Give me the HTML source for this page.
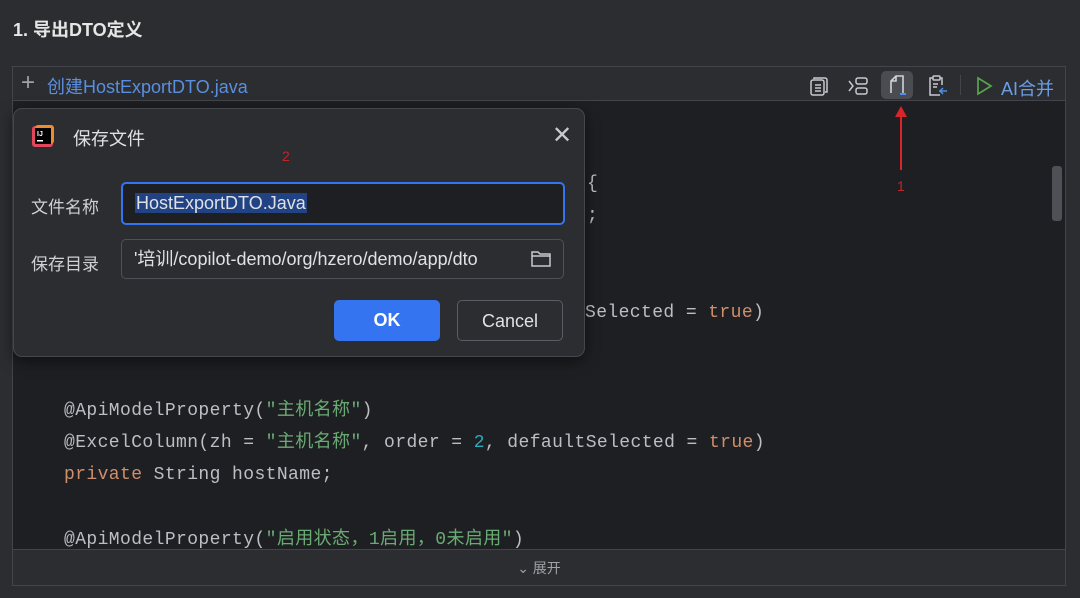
<!DOCTYPE html>
<html><head><meta charset="utf-8"><style>
*{margin:0;padding:0;box-sizing:border-box}
body{width:1080px;height:598px;background:#2b2d30;position:relative;overflow:hidden;font-family:"Liberation Sans","Noto Sans CJK SC",sans-serif;color:#dfe1e5}
.abs{position:absolute}
.title{left:13px;top:16px;font-size:18px;font-weight:bold;color:#e6e6e6}
.box{left:12px;top:66px;width:1054px;height:520px;border:1px solid #43454a;background:#1e1f22}
.hdr{left:0;top:0;width:1052px;height:34px;background:#2b2d30;border-bottom:1px solid #43454a}
.code{font-family:"Liberation Mono","Noto Sans CJK SC",monospace;font-size:18px;line-height:22px;height:22px;color:#bcbec4;white-space:pre;letter-spacing:0.4px}
.s{color:#6aab73}.k{color:#cf8e6d}.n{color:#2aacb8}
.ftr{left:0;top:482px;width:1052px;height:36px;background:#2b2d30;border-top:1px solid #43454a;text-align:center;font-size:14px;color:#a0a2a7;line-height:36px}
.dlg{left:13px;top:108px;width:572px;height:249px;background:#2b2d30;border:1px solid #45474c;border-radius:9px;box-shadow:0 4px 14px rgba(0,0,0,.5)}
.lbl{font-size:17px;color:#cfd1d5}
.inp{border-radius:5px;height:40px;font-size:18px;line-height:38px;padding-left:12px}
.btn{border-radius:5px;height:41px;text-align:center;line-height:41px;font-size:18px}
</style></head><body>
<div class="abs title">1. 导出DTO定义</div>
<div class="abs box">
 <div class="abs hdr">
  <div class="abs" style="left:8px;top:2px;font-size:24px;color:#a0a2a7;font-weight:300">+</div>
  <div class="abs" style="left:34px;top:6px;font-size:18px;color:#5a8fe0">创建HostExportDTO.java</div>
  <svg class="abs" style="left:794px;top:8px" width="24" height="22" viewBox="0 0 24 22" fill="none" stroke="#c8cacf" stroke-width="1.5"><rect x="4" y="5" width="13" height="15" rx="2"/><path d="M7 4V3h11a2 2 0 0 1 2 2v12h-2M8 10h6M8 13h6M8 16h6"/></svg>
  <svg class="abs" style="left:834px;top:8px" width="24" height="22" viewBox="0 0 24 22" fill="none" stroke="#c8cacf" stroke-width="1.5"><rect x="9" y="3" width="11" height="6" rx="2"/><rect x="9" y="13" width="11" height="6" rx="2"/><path d="M2 6l4 5-4 5"/></svg>
  <div class="abs" style="left:868px;top:4px;width:32px;height:28px;background:#4a4c51;border-radius:5px"></div>
  <svg class="abs" style="left:872px;top:6px" width="24" height="24" viewBox="0 0 24 24" fill="none" stroke="#d0d2d6" stroke-width="1.6"><path d="M6 20V8l5-5h7v17"/><path d="M11 3v5H6"/><path d="M15 21h6" stroke="#4d8ff0" stroke-width="2"/></svg>
  <svg class="abs" style="left:912px;top:7px" width="24" height="24" viewBox="0 0 24 24" fill="none" stroke="#c8cacf" stroke-width="1.5"><path d="M8 4H5v17h10M15 4h2v7"/><rect x="8" y="2" width="7" height="4" rx="1"/><path d="M8 10h5M8 13h4"/><path d="M14 17h8M18 14l-3 3 3 3" stroke="#4d8ff0"/></svg>
  <div class="abs" style="left:947px;top:8px;width:1px;height:20px;background:#43454a"></div>
  <svg class="abs" style="left:962px;top:9px" width="18" height="20" viewBox="0 0 18 20" fill="none" stroke="#57a64a" stroke-width="1.7"><path d="M3 2l13 8-13 8z"/></svg>
  <div class="abs" style="left:988px;top:8px;font-size:18px;color:#6b9ee8">AI合并</div>
 </div>
 <div class="abs" style="left:1039px;top:99px;width:10px;height:55px;background:#4e5055;border-radius:3px"></div>
 <div class="abs code" style="left:574px;top:106px">{</div>
 <div class="abs code" style="left:574px;top:138px">;</div>
 <div class="abs code" style="left:572px;top:235px">Selected = <span class="k">true</span>)</div>
 <div class="abs code" style="left:51px;top:333px">@ApiModelProperty(<span class="s">"主机名称"</span>)</div>
 <div class="abs code" style="left:51px;top:365px">@ExcelColumn(zh = <span class="s">"主机名称"</span>, order = <span class="n">2</span>, defaultSelected = <span class="k">true</span>)</div>
 <div class="abs code" style="left:51px;top:397px"><span class="k">private</span> String hostName;</div>
 <div class="abs code" style="left:51px;top:462px">@ApiModelProperty(<span class="s">"启用状态，1启用，0未启用"</span>)</div>
 <div class="abs ftr">⌄ 展开</div>
</div>
<div class="abs" style="left:900px;top:112px;width:2px;height:58px;background:#d9252a"></div>
<svg class="abs" style="left:894px;top:106px" width="14" height="12"><path d="M7 0L13 11H1z" fill="#d9252a"/></svg>
<div class="abs" style="left:897px;top:178px;font-size:14px;color:#c0262a">1</div>
<div class="dlg abs">
 <svg class="abs" style="left:17px;top:15px" width="24" height="24" viewBox="0 0 24 24"><rect x="1" y="2" width="21" height="21" rx="3" fill="#e2475c"/><rect x="4" y="1" width="19" height="19" rx="3" fill="#f08a30"/><rect x="4" y="4" width="16" height="16" fill="#000"/><text x="6" y="12" font-size="7" fill="#fff" font-family="Liberation Sans" font-weight="bold">IJ</text><rect x="6" y="16" width="6" height="1.5" fill="#fff"/></svg>
 <div class="abs" style="left:59px;top:16px;font-size:18px;color:#dfe1e5">保存文件</div>
 <div class="abs" style="left:538px;top:12px;font-size:24px;color:#c8cacf">✕</div>
 <div class="abs" style="left:268px;top:39px;font-size:14px;color:#c0262a">2</div>
 <div class="abs lbl" style="left:17px;top:84px">文件名称</div>
 <div class="abs inp" style="left:107px;top:73px;width:444px;height:43px;border:2px solid #3574f0;background:#1e1f22"><span style="background:#214283;color:#dfe1e5;padding:0 1px">HostExportDTO.Java</span></div>
 <div class="abs lbl" style="left:17px;top:141px">保存目录</div>
 <div class="abs inp" style="left:107px;top:130px;width:443px;border:1px solid #4e5157;background:#2b2d30;color:#dfe1e5">'培训/copilot-demo/org/hzero/demo/app/dto</div>
 <svg class="abs" style="left:516px;top:140px" width="22" height="20" viewBox="0 0 22 20" fill="none" stroke="#c8cacf" stroke-width="1.5"><path d="M2 3h6l2 2h10v12H2z"/><path d="M2 7h18"/></svg>
 <div class="abs btn" style="left:320px;top:191px;width:106px;background:#3574f0;color:#fff;font-weight:bold">OK</div>
 <div class="abs btn" style="left:443px;top:191px;width:106px;border:1px solid #5a5d63;color:#dfe1e5">Cancel</div>
</div>
</body></html>
